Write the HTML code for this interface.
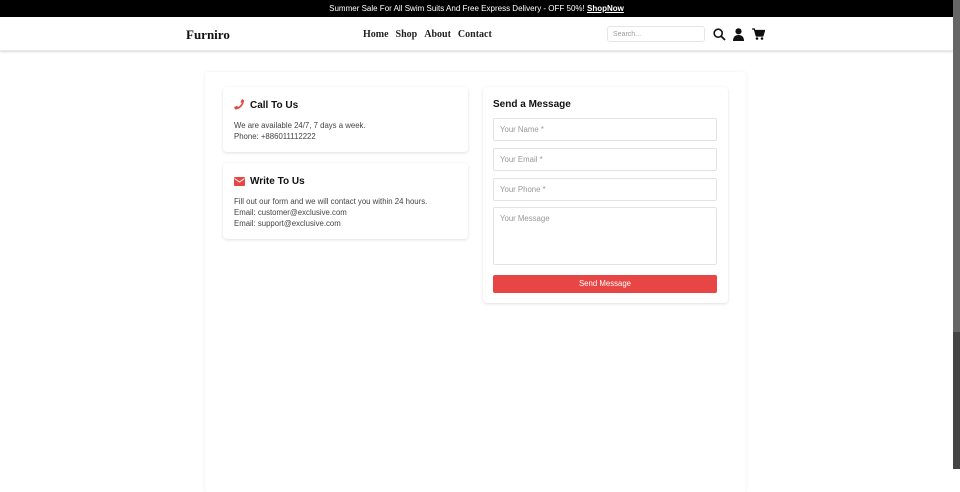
<!DOCTYPE html>
<html><head><style>
*{box-sizing:border-box;margin:0;padding:0}
body{width:960px;height:469px;overflow:hidden;background:#fff;font-family:"Liberation Sans",sans-serif;position:relative}
.top{position:absolute;left:0;top:0;width:953px;height:17px;background:#000;color:#fff;font-size:8px;text-align:center;line-height:17px}
.top b{text-decoration:underline}
.hdr{position:absolute;left:0;top:17px;width:953px;height:34px;background:#fff;box-shadow:0 1px 2px rgba(0,0,0,.15);border-bottom:1px solid #e8e8e8}
.logo{position:absolute;left:186px;top:10px;font-family:"Liberation Serif",serif;font-weight:bold;font-size:13px;color:#111}
.nav{position:absolute;left:363px;top:12px;font-family:"Liberation Serif",serif;font-weight:bold;font-size:10px;color:#222}
.nav span{margin-right:7px}
.search{position:absolute;left:607px;top:9px;width:98px;height:16px;border:1px solid #e5e5e5;border-radius:3px;font-size:7px;color:#999;padding:4px 5px}
.sb{position:absolute;left:953px;top:0;width:7px;height:469px;background:#444}
.sb div{height:332px;background:#666}
.wrap{position:absolute;left:205px;top:72px;width:541px;height:420px;background:#fff;box-shadow:0 0 3px rgba(0,0,0,.08);border-radius:3px}
.card{position:absolute;background:#fff;border-radius:4px;box-shadow:0 1px 3px rgba(0,0,0,.12)}
h3{font-size:10px;font-weight:bold;color:#111}
p{font-size:7.8px;color:#444;line-height:11px}
.in{position:absolute;left:10px;width:224px;height:23px;border:1px solid #e3e3e3;border-radius:2px;font-size:7.8px;color:#999;padding:6px 6px}
.btn{position:absolute;left:10px;top:188px;width:224px;height:18px;background:#e84545;border-radius:2px;color:#fff;font-size:7.8px;text-align:center;line-height:18px}
</style></head><body>
<div class="top">Summer Sale For All Swim Suits And Free Express Delivery - OFF 50%! <b>ShopNow</b></div>
<div class="hdr">
<div class="logo">Furniro</div>
<div class="nav"><span>Home</span><span>Shop</span><span>About</span><span>Contact</span></div>
<div class="search">Search...</div>
<svg style="position:absolute;left:713px;top:11px" width="13" height="13" viewBox="0 0 13 13"><circle cx="5.2" cy="5.2" r="4" fill="none" stroke="#111" stroke-width="1.6"/><path d="M8 8l4 4" stroke="#111" stroke-width="1.8"/></svg>
<svg style="position:absolute;left:733px;top:11px" width="11" height="13" viewBox="0 0 11 13"><circle cx="5.5" cy="3.3" r="3.1" fill="#111"/><path d="M0 13c0-4 2-6 5.5-6s5.5 2 5.5 6z" fill="#111"/></svg>
<svg style="position:absolute;left:752px;top:11px" width="13" height="12" viewBox="0 0 13 12"><path d="M0 1h2.3l2 7h6.5l1.7-5.5H3.3" fill="#111" stroke="#111" stroke-width="1.3"/><circle cx="5" cy="10.5" r="1.3" fill="#111"/><circle cx="10" cy="10.5" r="1.3" fill="#111"/></svg>
</div>
<div class="wrap">
<div class="card" style="left:18px;top:15px;width:245px;height:65px">
<svg style="position:absolute;left:11px;top:12px" width="11" height="11" viewBox="0 0 11 11"><path d="M10 1.2 8 0 6.5 3l1.3 1C7 6 5.7 7.3 4 8L3 6.7 0 8.3 1.2 10.5C6 10.5 10 6 10 1.2z" fill="#e84545"/></svg>
<h3 style="position:absolute;left:27px;top:13px">Call To Us</h3>
<p style="position:absolute;left:11px;top:33px">We are available 24/7, 7 days a week.<br>Phone: +886011112222</p>
</div>
<div class="card" style="left:18px;top:91px;width:245px;height:76px">
<svg style="position:absolute;left:11px;top:14px" width="11" height="9" viewBox="0 0 11 9"><rect width="11" height="9" rx="1" fill="#e84545"/><path d="M0.5 1.5 5.5 5 10.5 1.5" fill="none" stroke="#fff" stroke-width="1"/></svg>
<h3 style="position:absolute;left:27px;top:13px">Write To Us</h3>
<p style="position:absolute;left:11px;top:33px">Fill out our form and we will contact you within 24 hours.<br>Email: customer@exclusive.com<br>Email: support@exclusive.com</p>
</div>
<div class="card" style="left:278px;top:15px;width:245px;height:216px">
<h3 style="position:absolute;left:10px;top:12px">Send a Message</h3>
<div class="in" style="top:31px">Your Name *</div>
<div class="in" style="top:61px">Your Email *</div>
<div class="in" style="top:91px">Your Phone *</div>
<div class="in" style="top:120px;height:58px">Your Message</div>
<div class="btn">Send Message</div>
</div>
</div>
<div class="sb"><div></div></div>
</body></html>
